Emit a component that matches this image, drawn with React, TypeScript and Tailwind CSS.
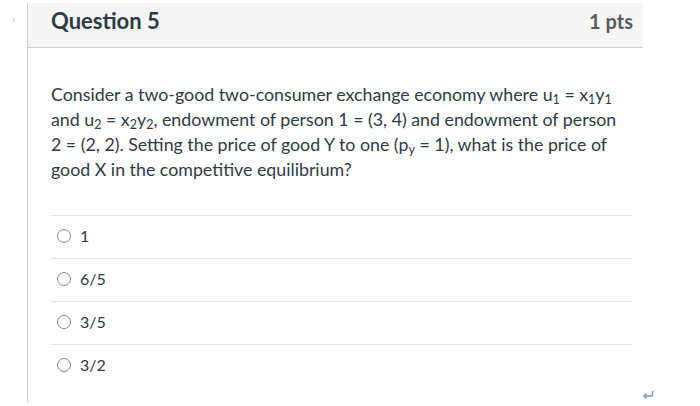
import React from "react";

const options = ["1", "6/5", "3/5", "3/2"];

function Sub({ children }: { children: React.ReactNode }) {
  return <span className="text-[12.5px] relative top-[3px] leading-none">{children}</span>;
}

export default function App() {
  return (
    <div className="w-[700px] h-[406px] bg-white relative overflow-hidden" style={{ fontFamily: "Lato, 'Noto Sans', sans-serif" }}>
      <div className="absolute left-[12px] top-[10px] text-[12px] text-[#b5b5b5]">›</div>
      <div className="ml-[27px] mt-[3px] w-[616px] h-[399px] border-l border-[#c7cdd1]">
        <div className="h-[45px] bg-[#f5f5f5] border-b border-[#c7cdd1] flex items-start justify-between pl-[23px] pr-[10px] pt-[4px]">
          <span className="text-[22px] leading-[28px] font-bold text-[#2d3b45]">Question 5</span>
          <span className="text-[20px] leading-[28px] font-bold text-[#555b60]">1 pts</span>
        </div>
        <div className="pl-[23px] pr-[6px] pt-[34px]">
          <p className="text-[17.8px] leading-[25px] text-[#2d3b45] whitespace-nowrap">
            Consider a two-good two-consumer exchange economy where u<Sub>1</Sub> = x<Sub>1</Sub>y<Sub>1</Sub>
            <br />
            and u<Sub>2</Sub> = x<Sub>2</Sub>y<Sub>2</Sub>, endowment of person 1 = (3, 4) and endowment of person
            <br />
            2 = (2, 2). Setting the price of good Y to one (p<Sub>y</Sub> = 1), what is the price of
            <br />
            good X in the competitive equilibrium?
          </p>
          <div className="mt-[33px] mr-[4px]">
            {options.map((o) => (
              <div key={o} className="h-[43px] border-t border-[#e6e6e6] flex items-center pl-[6px] pb-[2px]">
                <span className="w-[14px] h-[14px] rounded-full border border-[#8a8a8a] mr-[9px]" />
                <span className="text-[16px] text-[#2d3b45]">{o}</span>
              </div>
            ))}
          </div>
        </div>
      </div>
      <svg className="absolute left-[642px] top-[390px]" width="12" height="10" viewBox="0 0 12 10">
        <path d="M10.5 1 V6 H2 M4.5 3.5 L2 6 L4.5 8.5" fill="none" stroke="#6fa3d6" strokeWidth="1.5" />
      </svg>
    </div>
  );
}
